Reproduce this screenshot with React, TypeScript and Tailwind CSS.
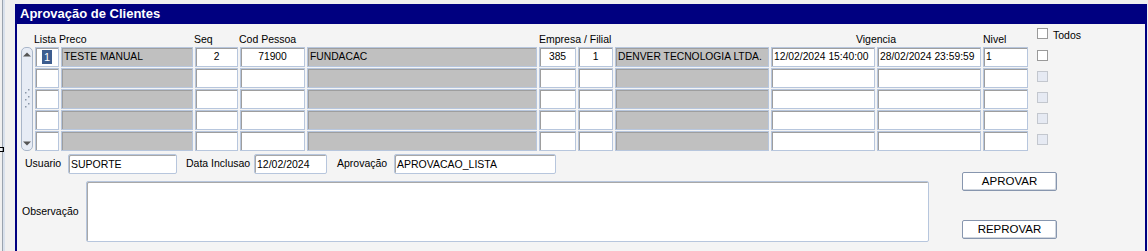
import React from 'react'

type CellProps = { gray?: boolean; center?: boolean; children?: React.ReactNode }

function Cell({ gray, center, children }: CellProps) {
  return (
    <div
      className={
        'h-[20px] border border-[#b7c6dd] shadow-[inset_1px_1px_0_#9e9e9e] flex items-center px-[2px] text-[10.3px] leading-none whitespace-nowrap overflow-hidden ' +
        (gray ? 'bg-[#c0c0c0] ' : 'bg-white ') +
        (center ? 'justify-center' : '')
      }
    >
      {children}
    </div>
  )
}

function Check({ disabled, className = '' }: { disabled?: boolean; className?: string }) {
  return (
    <div
      className={
        'w-[11px] h-[11px] border ' +
        (disabled ? 'bg-[#e6eaf3] border-[#c3c7ce] ' : 'bg-white border-[#9a9a9a] ') +
        className
      }
    />
  )
}

function Field({ w, children }: { w: string; children?: React.ReactNode }) {
  return (
    <div className={`${w} h-[20px] rounded-[2px] border border-[#b7c6dd] shadow-[inset_1px_1px_0_#a8a8a8] bg-white flex items-center px-[2px] text-[10.5px] leading-none whitespace-nowrap`}>
      {children}
    </div>
  )
}

function Scroller() {
  return (
    <div className="row-span-5 rounded-[5px] border border-[#a9b6c9] bg-[#e7ecf5] flex flex-col items-center justify-between py-[4px]">
      <svg width="8" height="5" viewBox="0 0 8 5">
        <path d="M0 4.5 L4 0.5 L8 4.5 Z" fill="#555" />
      </svg>
      <svg width="8" height="20" viewBox="0 0 8 20">
        {[0, 7, 14].map((y) => (
          <g key={y} fill="#8a96a8">
            <rect x="5" y={y} width="1.5" height="1.5" />
            <rect x="2" y={y + 3} width="1.5" height="1.5" />
          </g>
        ))}
      </svg>
      <svg width="8" height="5" viewBox="0 0 8 5">
        <path d="M0 0.5 L8 0.5 L4 4.5 Z" fill="#555" />
      </svg>
    </div>
  )
}

const empty = [1, 2, 3, 4]

export default function App() {
  return (
    <div className="w-[1148px] h-[251px] overflow-hidden bg-[#f0f0f0] flex font-['Liberation_Sans',Arial,sans-serif] text-black">
      {/* left strip */}
      <div className="w-[15px] flex-none relative">
        <div className="ml-[2px] w-[3px] h-full border-l border-[#9aa3ae] bg-[#d9e1ec]" />
        <div className="absolute left-0 top-[147px] w-[4px] h-[5px] border-t border-b border-r border-black" />
      </div>

      {/* panel */}
      <div className="mt-[4px] w-[1132px] flex-none border-l-2 border-r-2 border-[#000080] bg-[#f4f4f4] flex flex-col">
        <div className="h-[20px] bg-[#000080] text-white font-bold text-[13px] leading-[20px] pl-[3px]">
          Aprovação de Clientes
        </div>

        <div className="pl-[4px]">
          <div className="grid grid-cols-[12px_24px_132px_43px_65px_230px_37px_35px_154px_104px_104px_45px_18px_60px] grid-rows-[22px_20px_20px_20px_20px_20px] gap-x-[2px] gap-y-[1px] text-[10.5px]">
            {/* header */}
            <div className="col-start-2 col-span-2 self-end -ml-[1px] leading-[12px] pb-[1px]">Lista Preco</div>
            <div className="col-start-4 self-end -ml-[1px] leading-[12px] pb-[1px]">Seq</div>
            <div className="col-start-5 col-span-2 self-end -ml-[1px] leading-[12px] pb-[1px]">Cod Pessoa</div>
            <div className="col-start-7 col-span-3 self-end leading-[12px] pb-[1px]">Empresa / Filial</div>
            <div className="col-start-10 col-span-2 self-end text-center leading-[12px] pb-[1px]">Vigencia</div>
            <div className="col-start-12 self-end leading-[12px] pb-[1px]">Nivel</div>
            <div className="col-start-13 col-span-2 flex items-start gap-[5px] ml-[7px]">
              <Check className="mt-[4px] flex-none" />
              <span className="mt-[5px] leading-[12px]">Todos</span>
            </div>

            {/* rows */}
            <Scroller />
            <Cell center>
              <span className="bg-[#3d5d8f] text-white px-[1.5px] leading-[14px] text-[11px]">1</span>
            </Cell>
            <Cell gray>TESTE MANUAL</Cell>
            <Cell center>2</Cell>
            <Cell center>71900</Cell>
            <Cell gray>FUNDACAC</Cell>
            <Cell center>385</Cell>
            <Cell center>1</Cell>
            <Cell gray>DENVER TECNOLOGIA LTDA.</Cell>
            <Cell>12/02/2024 15:40:00</Cell>
            <Cell>28/02/2024 23:59:59</Cell>
            <Cell>1</Cell>
            <Check className="mt-[3px] ml-[7px]" />
            <div />

            {empty.map((r) => (
              <React.Fragment key={r}>
                <Cell />
                <Cell gray />
                <Cell />
                <Cell />
                <Cell gray />
                <Cell />
                <Cell />
                <Cell gray />
                <Cell />
                <Cell />
                <Cell />
                <Check disabled className="mt-[3px] ml-[7px]" />
                <div />
              </React.Fragment>
            ))}
          </div>
        </div>

        {/* bottom */}
        <div className="mt-[3px] flex text-[10.5px]">
          <div className="flex flex-col">
            <div className="flex items-center">
              <span className="ml-[8px] w-[43px]">Usuario</span>
              <Field w="w-[109px]">SUPORTE</Field>
              <span className="ml-[9px] w-[68px]">Data Inclusao</span>
              <Field w="w-[73px]">12/02/2024</Field>
              <span className="ml-[10px] w-[57px]">Aprovação</span>
              <Field w="w-[162px]">APROVACAO_LISTA</Field>
            </div>
            <div className="mt-[7px] flex items-center">
              <span className="ml-[5px] w-[64px]">Observação</span>
              <div className="w-[843px] h-[61px] rounded-[2px] border border-[#b7c6dd] shadow-[inset_1px_1px_0_#a8a8a8] bg-white" />
            </div>
          </div>
          <div className="ml-[33px] mt-[18px] flex flex-col gap-[29px]">
            <button className="w-[95px] h-[19px] rounded-[2px] border border-[#8796ae] bg-white shadow-[inset_-1px_-1px_0_#d0d6df] text-[11.5px] leading-none">
              APROVAR
            </button>
            <button className="w-[95px] h-[19px] rounded-[2px] border border-[#8796ae] bg-white shadow-[inset_-1px_-1px_0_#d0d6df] text-[11.5px] leading-none">
              REPROVAR
            </button>
          </div>
        </div>
      </div>
    </div>
  )
}
